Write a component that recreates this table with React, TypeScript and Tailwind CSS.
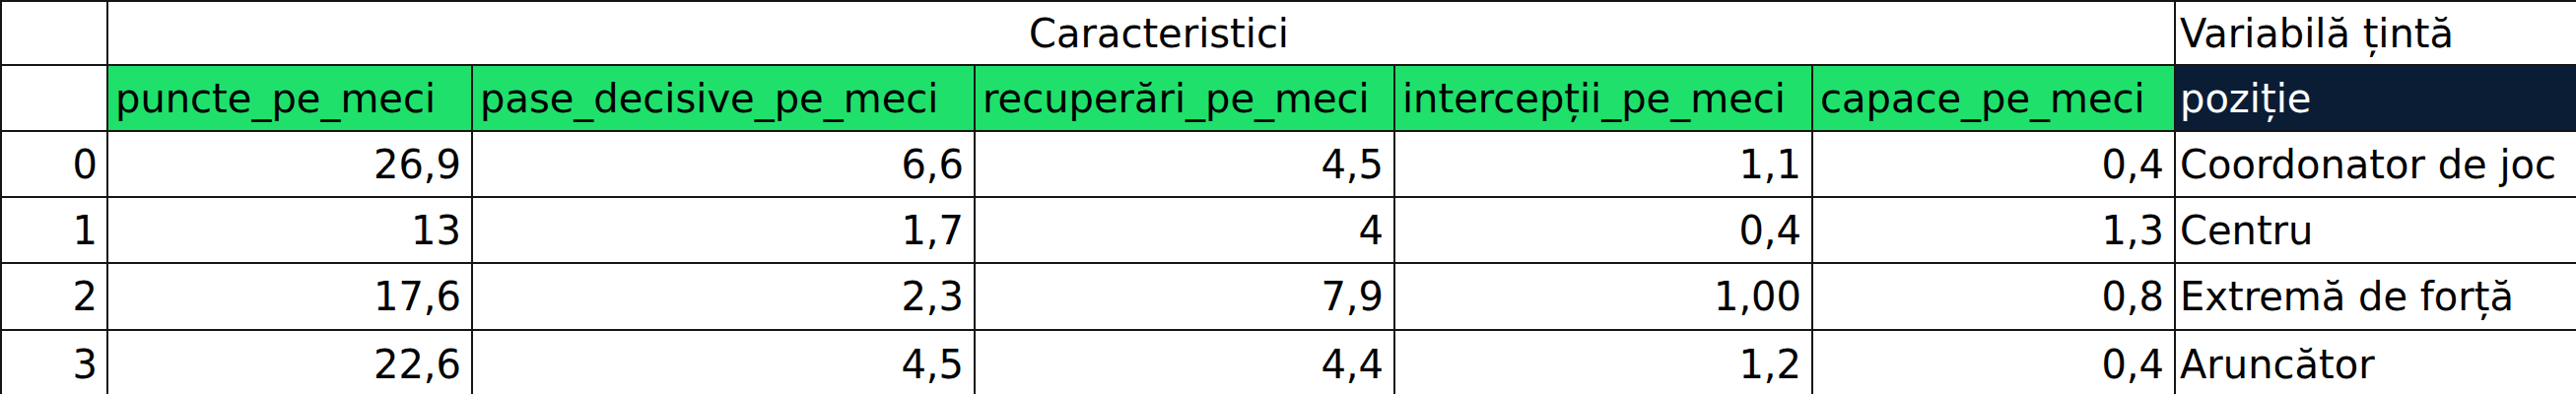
const features = [
  'puncte_pe_meci',
  'pase_decisive_pe_meci',
  'recuperări_pe_meci',
  'intercepții_pe_meci',
  'capace_pe_meci',
]

const rows = [
  { idx: '0', values: ['26,9', '6,6', '4,5', '1,1', '0,4'], target: 'Coordonator de joc' },
  { idx: '1', values: ['13', '1,7', '4', '0,4', '1,3'], target: 'Centru' },
  { idx: '2', values: ['17,6', '2,3', '7,9', '1,00', '0,8'], target: 'Extremă de forță' },
  { idx: '3', values: ['22,6', '4,5', '4,4', '1,2', '0,4'], target: 'Aruncător' },
]

const rowHeights = ['h-[67px]', 'h-[67px]', 'h-[68px]', 'h-[69px]']

export default function App() {
  return (
    <div
      className="w-[2614px] h-[400px] overflow-hidden bg-white text-[40px] text-black"
      style={{ fontFamily: '"DejaVu Sans", "Open Sans", sans-serif' }}
    >
      <div className="grid grid-cols-[108px_370px_510px_426px_424px_368px_408px] border-t-2 border-l-2 border-[#151515] leading-none">
        {/* top header row */}
        <div className="h-[65px] border-r-2 border-b-2 border-[#151515]" />
        <div className="col-span-5 h-[65px] flex items-center justify-center pl-[36px] border-r-2 border-b-2 border-[#151515]">
          Caracteristici
        </div>
        <div className="h-[65px] flex items-center pl-[4px] border-b-2 border-[#151515] whitespace-nowrap">
          Variabilă țintă
        </div>

        {/* column names */}
        <div className="h-[67px] border-r-2 border-b-2 border-[#151515]" />
        {features.map((f) => (
          <div
            key={f}
            className="h-[67px] flex items-center pl-[7px] bg-[#1fe06b] border-r-2 border-b-2 border-[#151515] whitespace-nowrap overflow-hidden"
          >
            {f}
          </div>
        ))}
        <div className="h-[67px] flex items-center pl-[4px] bg-[#0b1d35] text-white border-b-2 border-[#151515]">
          poziție
        </div>

        {/* data */}
        {rows.map((r, i) => (
          <div key={r.idx} className="contents">
            <div className={`${rowHeights[i]} flex items-center justify-end pr-[9px] border-r-2 border-b-2 border-[#151515]`}>
              {r.idx}
            </div>
            {r.values.map((v, j) => (
              <div
                key={j}
                className={`${rowHeights[i]} flex items-center justify-end pr-[10px] border-r-2 border-b-2 border-[#151515]`}
              >
                {v}
              </div>
            ))}
            <div className={`${rowHeights[i]} flex items-center pl-[4px] border-b-2 border-[#151515] whitespace-nowrap`}>
              {r.target}
            </div>
          </div>
        ))}
      </div>
    </div>
  )
}
